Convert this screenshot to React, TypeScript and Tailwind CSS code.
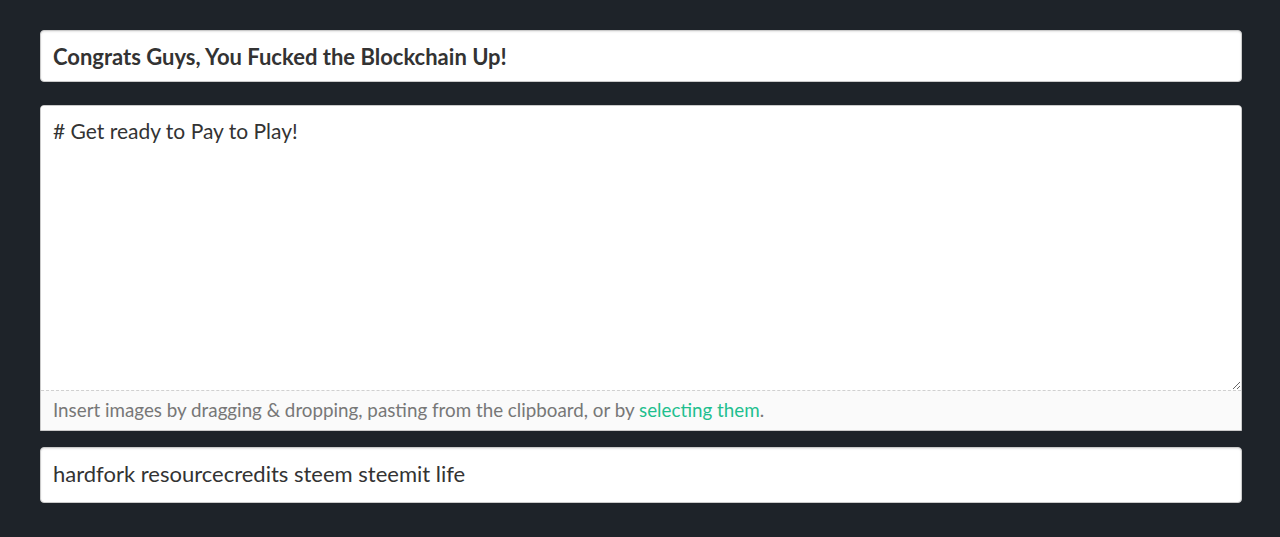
import React from 'react';

const font = { fontFamily: '"Source Sans Pro", Lato, "Liberation Sans", sans-serif' };

export default function App() {
  return (
    <div className="min-h-[537px] bg-[#1e2329] pl-10 pr-[38px] pt-[30px] pb-8 flex flex-col" style={font}>
      <input
        type="text"
        defaultValue="Congrats Guys, You Fucked the Blockchain Up!"
        className="h-[52px] w-full rounded-[4px] border border-[#cacaca] bg-white px-3 text-[22px] font-bold text-[#333] shadow-[inset_0_1px_2px_rgba(0,0,0,0.1)] outline-none"
      />

      <div className="mt-[23px] flex flex-col rounded-t-[4px] overflow-hidden border border-[#cacaca] bg-white">
        <textarea
          defaultValue="# Get ready to Pay to Play!"
          className="h-[284px] w-full resize-y bg-white px-3 pt-[11px] text-[21px] leading-[1.3] text-[#333] outline-none"
        />
        <div className="flex h-[40px] items-center border-t border-dashed border-[#d0d0d0] bg-[#fafafa] px-3 text-[18.8px] text-[#777]">
          <span>
            Insert images by dragging &amp; dropping, pasting from the clipboard, or by{' '}
            <a href="#" className="text-[#1fbf8f]">selecting them</a>.
          </span>
        </div>
      </div>

      <input
        type="text"
        defaultValue="hardfork resourcecredits steem steemit life"
        className="mt-[16px] h-[56px] w-full rounded-[4px] border border-[#cacaca] bg-white px-3 pb-[4px] text-[22px] text-[#333] shadow-[inset_0_1px_2px_rgba(0,0,0,0.1)] outline-none"
      />
    </div>
  );
}
